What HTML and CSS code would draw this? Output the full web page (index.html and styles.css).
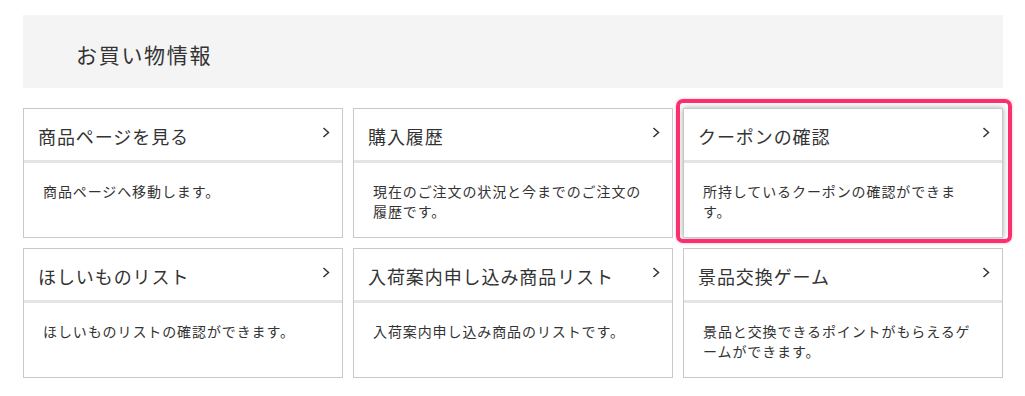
FILE: index.html
```html
<!DOCTYPE html>
<html lang="ja">
<head>
<meta charset="utf-8">
<title>お買い物情報</title>
<link rel="stylesheet" href="styles.css">
</head>
<body>
<div class="page">
  <div class="header"><h2 class="header-title">お買い物情報</h2></div>
  <div class="grid">
    <a class="card" href="#">
      <div class="card-head"><span class="card-title">商品ページを見る</span><svg class="chev" width="8" height="11" viewBox="0 0 8 11"><polyline points="1.5,1 6.5,5.5 1.5,10" fill="none" stroke="#333" stroke-width="1.5"/></svg></div>
      <div class="card-desc">商品ページへ移動します。</div>
    </a>
    <a class="card" href="#">
      <div class="card-head"><span class="card-title">購入履歴</span><svg class="chev" width="8" height="11" viewBox="0 0 8 11"><polyline points="1.5,1 6.5,5.5 1.5,10" fill="none" stroke="#333" stroke-width="1.5"/></svg></div>
      <div class="card-desc">現在のご注文の状況と今までのご注文の履歴です。</div>
    </a>
    <a class="card card-active" href="#">
      <div class="card-head"><span class="card-title">クーポンの確認</span><svg class="chev" width="8" height="11" viewBox="0 0 8 11"><polyline points="1.5,1 6.5,5.5 1.5,10" fill="none" stroke="#333" stroke-width="1.5"/></svg></div>
      <div class="card-desc">所持しているクーポンの確認ができます。</div>
    </a>
    <a class="card" href="#">
      <div class="card-head"><span class="card-title">ほしいものリスト</span><svg class="chev" width="8" height="11" viewBox="0 0 8 11"><polyline points="1.5,1 6.5,5.5 1.5,10" fill="none" stroke="#333" stroke-width="1.5"/></svg></div>
      <div class="card-desc">ほしいものリストの確認ができます。</div>
    </a>
    <a class="card" href="#">
      <div class="card-head"><span class="card-title">入荷案内申し込み商品リスト</span><svg class="chev" width="8" height="11" viewBox="0 0 8 11"><polyline points="1.5,1 6.5,5.5 1.5,10" fill="none" stroke="#333" stroke-width="1.5"/></svg></div>
      <div class="card-desc">入荷案内申し込み商品のリストです。</div>
    </a>
    <a class="card" href="#">
      <div class="card-head"><span class="card-title">景品交換ゲーム</span><svg class="chev" width="8" height="11" viewBox="0 0 8 11"><polyline points="1.5,1 6.5,5.5 1.5,10" fill="none" stroke="#333" stroke-width="1.5"/></svg></div>
      <div class="card-desc">景品と交換できるポイントがもらえるゲームができます。</div>
    </a>
  </div>
</div>
</body>
</html>
```
FILE: styles.css
```css
html, body {
  margin: 0;
  padding: 0;
  background: #fff;
}
body {
  font-family: "Noto Sans CJK JP", "Noto Sans", sans-serif;
  color: #333;
}
.page {
  padding: 15px 0 0 23px;
  width: 980px;
}
.header {
  background: #f4f4f4;
  height: 73px;
  display: flex;
  align-items: center;
  padding-left: 53px;
}
.header-title {
  margin: 4px 0 0;
  font-size: 21px;
  font-weight: 400;
  letter-spacing: 1.7px;
  color: #333;
}
.grid {
  margin-top: 20px;
  display: grid;
  grid-template-columns: repeat(3, 320px);
  gap: 10px;
}
.card {
  position: relative;
  display: flex;
  flex-direction: column;
  border: 1px solid #c9c9c9;
  background: #fff;
  text-decoration: none;
  color: #333;
}
.card-head {
  height: 51px;
  display: flex;
  justify-content: space-between;
  align-items: flex-start;
  padding: 0 12px 0 14px;
  border-bottom: 3px solid #e4e4e4;
}
.card-title {
  margin-top: 14px;
  font-size: 18px;
  line-height: 26px;
  letter-spacing: 0.92px;
}
.chev {
  margin-top: 18px;
}
.card-desc {
  flex: 1;
  padding: 18px 20px 16px 19px;
  font-size: 14px;
  line-height: 20px;
  letter-spacing: 0.9px;
}
.card-active {
  box-shadow: 0 0 6px rgba(0, 0, 0, 0.35);
}
.card-active::after {
  content: "";
  position: absolute;
  top: -10px;
  left: -8px;
  right: -10px;
  bottom: -6px;
  border: 4px solid #fb2f6d;
  border-radius: 7px;
  box-shadow: 0 0 3px rgba(251, 47, 109, 0.35);
  pointer-events: none;
}
```
